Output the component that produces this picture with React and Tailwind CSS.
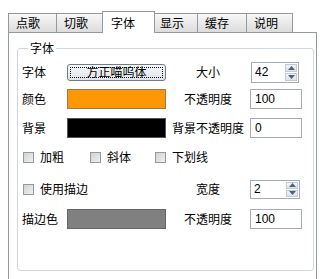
import React from 'react';

// ## Pestanas
const tabs = [
  { label: '点歌', w: 'w-[49px]' },
  { label: '切歌', w: 'w-[48px]' },
  { label: '字体', w: 'w-[53px]', active: true },
  { label: '显示', w: 'w-[46px]' },
  { label: '缓存', w: 'w-[50px]' },
  { label: '说明', w: 'w-[47px]' }
];

function Tab({ label, w, active }) {
  if (active) {
    return (
      <div className={`${w} relative z-10 -mx-[2px] -mb-px flex h-[22px] items-center border border-b-0 border-[#919b9c] bg-white pl-[8px]`}>
        {label}
      </div>
    );
  }
  return (
    <div className={`${w} -ml-px flex h-[19px] items-center border border-b-0 border-[#919b9c] bg-gradient-to-b from-[#f7f7f7] to-[#dcdcdc] pl-[7px] first:ml-0`}>
      {label}
    </div>
  );
}

function Field({ value, className = 'w-[52px] h-[20px]' }) {
  return (
    <div className={`${className} flex items-center border border-[#a5acb5] bg-white pl-[4px] font-['Liberation_Sans',sans-serif] text-[12px]`}>
      {value}
    </div>
  );
}

function Spin({ value, className }) {
  return (
    <div className={`${className} flex border border-[#a5acb5] bg-white`}>
      <div className="flex flex-1 items-center pl-[3px] font-['Liberation_Sans',sans-serif] text-[12px]">{value}</div>
      <div className="flex w-[14px] flex-col gap-px p-px">
        <div className="flex flex-1 items-center justify-center border border-[#c3cad3] bg-gradient-to-b from-[#f4f6f8] to-[#dde3ea]">
          <svg width="7" height="4" viewBox="0 0 7 4"><path d="M0 4 L3.5 0 L7 4 Z" fill="#4d6185" /></svg>
        </div>
        <div className="flex flex-1 items-center justify-center border border-[#c3cad3] bg-gradient-to-b from-[#f4f6f8] to-[#dde3ea]">
          <svg width="7" height="4" viewBox="0 0 7 4"><path d="M0 0 L7 0 L3.5 4 Z" fill="#4d6185" /></svg>
        </div>
      </div>
    </div>
  );
}

function Check({ label, className = '' }) {
  return (
    <div className={`${className} flex items-center`}>
      <div className="h-[11px] w-[11px] border border-[#8f9aa5] bg-gradient-to-br from-[#d2d2d2] to-[#f0f0f0]" />
      <span className="ml-[6px]">{label}</span>
    </div>
  );
}

export default function App() {
  return (
    <div className="h-[279px] w-[334px] overflow-hidden bg-white font-['Noto_Sans_CJK_SC','Liberation_Sans',sans-serif] text-[12px] leading-none text-black">
      <div className="flex h-[32px] items-end pl-[8px]">
        {tabs.map((t) => (
          <Tab key={t.label} {...t} />
        ))}
      </div>

      <div className="ml-[8px] h-[260px] w-[309px] border border-[#919b9c] bg-white pl-[8px] pt-[7px]">
        <fieldset className="h-[231px] w-[297px] rounded-[3px] border border-[#d0d7de] pl-[4px]">
          <legend className="ml-[6px] px-[2px] leading-[16px]">字体</legend>

          <div className="mt-[5px] flex h-[22px] items-center">
            <span className="w-[45px]">字体</span>
            <div className="flex h-[17px] w-[99px] items-center justify-center rounded-[3px] border border-[#6d7b8a] bg-gradient-to-b from-[#f6f8fa] to-[#dfe3e8] p-[2px]">
              <div className="flex h-full w-full items-center justify-center border border-dotted border-black">方正喵呜体</div>
            </div>
            <span className="w-[84px] text-center">大小</span>
            <Spin value="42" className="ml-px h-[21px] w-[48px]" />
          </div>

          <div className="mt-[6px] flex h-[20px] items-center">
            <span className="w-[45px]">颜色</span>
            <div className="h-[20px] w-[99px] border border-[#a07850] bg-[#fd9704]" />
            <span className="w-[84px] text-center">不透明度</span>
            <Field value="100" />
          </div>

          <div className="mt-[9px] flex h-[20px] items-center">
            <span className="w-[45px]">背景</span>
            <div className="h-[20px] w-[99px] border border-[#555] bg-black" />
            <span className="w-[84px] text-center">背景不透明度</span>
            <Field value="0" />
          </div>

          <div className="mt-[9px] flex h-[20px] items-center pl-px">
            <Check label="加粗" className="w-[67px]" />
            <Check label="斜体" className="w-[65px]" />
            <Check label="下划线" />
          </div>

          <div className="mt-[12px] flex h-[20px] items-center">
            <Check label="使用描边" className="w-[144px] pl-px" />
            <span className="w-[84px] text-center">宽度</span>
            <Spin value="2" className="h-[19px] w-[50px]" />
          </div>

          <div className="mt-[10px] flex h-[20px] items-center">
            <span className="w-[45px]">描边色</span>
            <div className="h-[20px] w-[99px] border border-[#666] bg-[#808080]" />
            <span className="w-[84px] text-center">不透明度</span>
            <Field value="100" />
          </div>
        </fieldset>
      </div>
    </div>
  );
}
